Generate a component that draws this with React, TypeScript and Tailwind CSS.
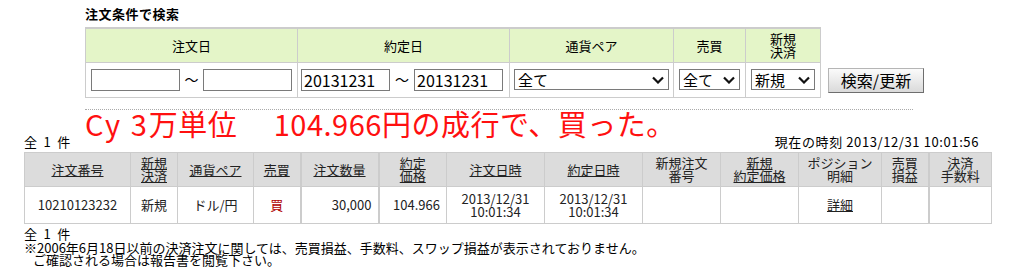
import React from 'react';

const font = { fontFamily: '"Noto Sans CJK JP", "Noto Sans", sans-serif' };

function Chevron() {
  return (
    <svg width="12" height="8" viewBox="0 0 12 8" className="pointer-events-none absolute right-[5px] top-1/2 -translate-y-1/2">
      <polyline points="1,1.5 6,6.5 11,1.5" fill="none" stroke="#111" strokeWidth="2.2" />
    </svg>
  );
}

function FakeSelect({ value, width }: { value: string; width: string }) {
  return (
    <div className={`relative h-[21px] ${width}`}>
      <select
        defaultValue={value}
        className="h-full w-full appearance-none border border-[#7a7a7a] bg-white pl-[3px] text-[15px] leading-[19px] text-black outline-none"
        style={font}
      >
        <option value={value}>{value}</option>
      </select>
      <Chevron />
    </div>
  );
}

function DateInput({ value }: { value: string }) {
  return (
    <input
      defaultValue={value}
      className="h-[22px] w-[89px] border border-[#7a7a7a] bg-white px-[2px] text-[16px] leading-[20px] text-black outline-none"
      style={font}
    />
  );
}

const cols = [106, 47, 76, 47, 78, 68, 98, 98, 78, 78, 83, 47, 63];

export default function App() {
  return (
    <div className="h-[279px] w-[1009px] overflow-hidden bg-white text-black" style={font}>
      <div className="pl-[85px] pt-[6px]">
        <div className="text-[13px] font-bold leading-[16px] tracking-[0.5px]">注文条件で検索</div>
        <div className="mt-[5px] flex items-end">
          <table className="w-[735px] table-fixed border-collapse text-[13px]">
            <colgroup>
              <col className="w-[212px]" />
              <col className="w-[212px]" />
              <col className="w-[164px]" />
              <col className="w-[72px]" />
              <col className="w-[75px]" />
            </colgroup>
            <thead>
              <tr className="h-[34px] bg-[#e4f5c8]">
                <th className="border border-t-2 border-[#cccccc] font-normal">注文日</th>
                <th className="border border-t-2 border-[#cccccc] font-normal">約定日</th>
                <th className="border border-t-2 border-[#cccccc] font-normal">通貨ペア</th>
                <th className="border border-t-2 border-[#cccccc] font-normal">売買</th>
                <th className="border border-t-2 border-[#cccccc] font-normal leading-[13px]">
                  新規
                  <br />
                  決済
                </th>
              </tr>
            </thead>
            <tbody>
              <tr className="h-[35px]">
                <td className="border border-[#cccccc] pl-[5px]">
                  <div className="flex items-center">
                    <DateInput value="" />
                    <span className="w-[23px] text-center text-[14px]">～</span>
                    <DateInput value="" />
                  </div>
                </td>
                <td className="border border-[#cccccc] pl-[3px]">
                  <div className="flex items-center">
                    <DateInput value="20131231" />
                    <span className="w-[24px] text-center text-[14px]">～</span>
                    <DateInput value="20131231" />
                  </div>
                </td>
                <td className="border border-[#cccccc] pl-[4px]">
                  <FakeSelect value="全て" width="w-[155px]" />
                </td>
                <td className="border border-[#cccccc] pl-[5px]">
                  <FakeSelect value="全て" width="w-[61px]" />
                </td>
                <td className="border border-[#cccccc] pl-[5px]">
                  <FakeSelect value="新規" width="w-[64px]" />
                </td>
              </tr>
            </tbody>
          </table>
          <button
            className="mb-[5px] ml-[7px] h-[25px] w-[96px] border border-[#b5b5b5] border-b-[#6e6e6e] border-r-[#6e6e6e] bg-gradient-to-b from-[#fbfbfb] to-[#dadada] text-[16px] leading-[22px] text-black"
            style={font}
          >
            検索/更新
          </button>
        </div>
        <div className="mt-[11px] w-[828px] border-t border-dotted border-[#aaaaaa]" />
        <div className="h-[24px] -translate-y-[1px] whitespace-nowrap text-[29px] leading-none tracking-[0.5px] text-[#ff1010]">
          <span className="tracking-[2px]">Cy 3</span>万単位　 104.966円の成行で、買った。
        </div>
      </div>

      <div className="pl-[24px]">
        <div className="flex h-[16px] w-[955px] items-end justify-between text-[13px] leading-[16px]">
          <span>全&#x2002;1&#x2002;件</span>
          <span className="tracking-[0.6px]">現在の時刻 2013/12/31 10:01:56</span>
        </div>
        <table className="mt-[2px] w-[967px] table-fixed border-collapse text-[13px] text-[#222]">
          <colgroup>
            {cols.map((w, i) => (
              <col key={i} style={{ width: w }} />
            ))}
          </colgroup>
          <thead>
            <tr className="h-[34px] bg-[#dcdcdc] leading-[13px]">
              <th className="border border-[#cccccc] font-normal"><span className="underline">注文番号</span></th>
              <th className="border border-[#cccccc] font-normal"><span className="underline">新規<br />決済</span></th>
              <th className="border border-[#cccccc] font-normal"><span className="underline">通貨ペア</span></th>
              <th className="border border-[#cccccc] font-normal"><span className="underline">売買</span></th>
              <th className="border border-l-2 border-[#cccccc] font-normal"><span className="underline">注文数量</span></th>
              <th className="border border-l-2 border-[#cccccc] font-normal"><span className="underline">約定<br />価格</span></th>
              <th className="border border-[#cccccc] font-normal"><span className="underline">注文日時</span></th>
              <th className="border border-[#cccccc] font-normal"><span className="underline">約定日時</span></th>
              <th className="border border-[#cccccc] font-normal">新規注文<br />番号</th>
              <th className="border border-[#cccccc] font-normal"><span className="underline">新規<br />約定価格</span></th>
              <th className="border border-[#cccccc] font-normal">ポジション<br />明細</th>
              <th className="border border-[#cccccc] font-normal">売買<br />損益</th>
              <th className="border border-l-2 border-[#cccccc] font-normal">決済<br />手数料</th>
            </tr>
          </thead>
          <tbody>
            <tr className="h-[37px] leading-[13px]">
              <td className="border border-[#cccccc] text-center">10210123232</td>
              <td className="border border-[#cccccc] text-center">新規</td>
              <td className="border border-[#cccccc] text-center">ドル/円</td>
              <td className="border border-[#cccccc] text-center text-[#b00000]">買</td>
              <td className="border border-l-2 border-[#cccccc] pr-[6px] text-right">30,000</td>
              <td className="border border-l-2 border-[#cccccc] pr-[6px] text-right">104.966</td>
              <td className="border border-[#cccccc] text-center">2013/12/31<br />10:01:34</td>
              <td className="border border-[#cccccc] text-center">2013/12/31<br />10:01:34</td>
              <td className="border border-[#cccccc]" />
              <td className="border border-[#cccccc]" />
              <td className="border border-[#cccccc] text-center"><span className="underline">詳細</span></td>
              <td className="border border-[#cccccc]" />
              <td className="border border-l-2 border-[#cccccc]" />
            </tr>
          </tbody>
        </table>
        <div className="mt-[3px] text-[13px] leading-[14px]">全&#x2002;1&#x2002;件</div>
        <div className="mt-[1px] whitespace-nowrap text-[13px] leading-[12px]">
          <div>※2006年6月18日以前の決済注文に関しては、売買損益、手数料、スワップ損益が表示されておりません。</div>
          <div className="pl-[9px]">ご確認される場合は報告書を閲覧下さい。</div>
        </div>
      </div>
    </div>
  );
}
